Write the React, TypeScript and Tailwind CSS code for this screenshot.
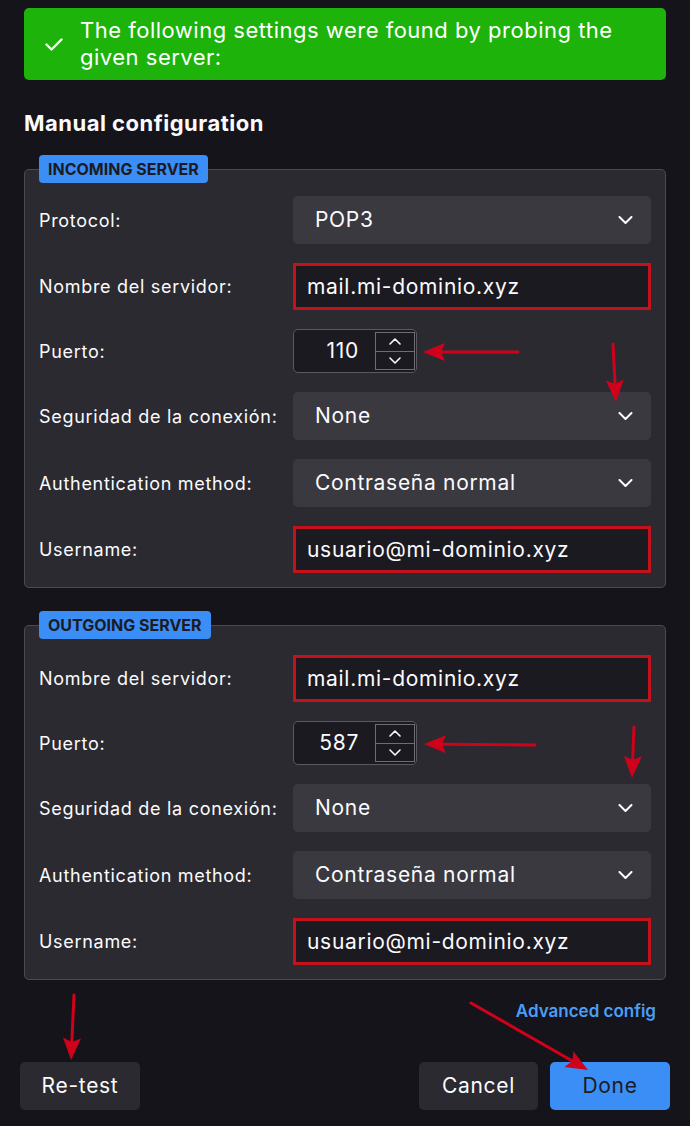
import type { ReactNode } from "react";

/* ---------- small drawings ---------- */
function Chevron() {
  return (
    <svg width="15" height="8" viewBox="0 0 15 8" fill="none">
      <path
        d="M1.5 1 7.5 7 13.5 1"
        stroke="#fbfbfe"
        strokeWidth="2"
        strokeLinecap="round"
        strokeLinejoin="round"
      />
    </svg>
  );
}

function SpinChevron({ up }: { up?: boolean }) {
  return (
    <svg width="12" height="7" viewBox="0 0 12 7" fill="none">
      <path
        d={up ? "M1 6 6 1 11 6" : "M1 1 6 6 11 1"}
        stroke="#fbfbfe"
        strokeWidth="1.6"
        strokeLinecap="round"
        strokeLinejoin="round"
      />
    </svg>
  );
}

function Check() {
  return (
    <svg width="18" height="13" viewBox="0 0 18 13" fill="none">
      <path
        d="M1.5 6.5 6.5 11.5 16.5 1.5"
        stroke="#ffffff"
        strokeWidth="2.4"
        strokeLinecap="round"
        strokeLinejoin="round"
      />
    </svg>
  );
}

/* ---------- red annotation arrows ---------- */
type ArrowProps = { x1: number; y1: number; x2: number; y2: number };

function Arrow({ x1, y1, x2, y2 }: ArrowProps) {
  const len = Math.hypot(x2 - x1, y2 - y1);
  const ux = (x2 - x1) / len;
  const uy = (y2 - y1) / len;
  const px = -uy;
  const py = ux;
  const head = 22;
  const half = 9;
  const bx = x2 - ux * head;
  const by = y2 - uy * head;
  const nx = x2 - ux * (head - 4);
  const ny = y2 - uy * (head - 4);
  const pts = [
    `${x2},${y2}`,
    `${bx + px * half},${by + py * half}`,
    `${nx},${ny}`,
    `${bx - px * half},${by - py * half}`,
  ].join(" ");
  return (
    <g>
      <line x1={x1} y1={y1} x2={nx} y2={ny} stroke="#d0021b" strokeWidth="3" strokeLinecap="round" />
      <polygon points={pts} fill="#d0021b" />
    </g>
  );
}

const arrows: ArrowProps[] = [
  { x1: 518, y1: 352, x2: 423, y2: 352 },
  { x1: 613, y1: 344, x2: 616, y2: 402 },
  { x1: 535, y1: 745, x2: 424, y2: 744 },
  { x1: 634, y1: 727, x2: 632, y2: 778 },
  { x1: 74, y1: 995, x2: 71, y2: 1060 },
  { x1: 471, y1: 1003, x2: 588, y2: 1070 },
];

/* ---------- form controls ---------- */
function Select({ value }: { value: string }) {
  return (
    <div className="flex h-12 items-center justify-between rounded-[5px] bg-[#3a3940] pl-[22px] pr-[18px] text-[21px] tracking-[0.7px]">
      <span>{value}</span>
      <Chevron />
    </div>
  );
}

function TextInput({ value }: { value: string }) {
  return (
    <div className="flex h-[47px] items-center border-[3px] border-[#c4121c] bg-[#1b1a20] px-[11px] text-[21px] tracking-[0.7px]">
      {value}
    </div>
  );
}

function Spinner({ value }: { value: string }) {
  return (
    <div className="flex h-11 w-[124px] items-center rounded-[5px] border border-[#5b5a62] bg-[#1b1a20] pr-px">
      <span className="flex-1 pr-4 text-right text-[21px] tracking-[0.7px]">{value}</span>
      <div className="flex h-[38px] w-10 flex-col border border-[#6e6d74]">
        <span className="flex flex-1 items-center justify-center border-b border-[#6e6d74]">
          <SpinChevron up />
        </span>
        <span className="flex flex-1 items-center justify-center">
          <SpinChevron />
        </span>
      </div>
    </div>
  );
}

function Row({ label, children }: { label: string; children: ReactNode }) {
  return (
    <>
      <span className="text-[18px] tracking-[0.7px]">{label}</span>
      <div>{children}</div>
    </>
  );
}

function ServerBox({ title, top, children }: { title: string; top: string; children: ReactNode }) {
  return (
    <fieldset className="rounded-[5px] border border-[#4a4950] bg-[#2a2a30] px-[14px] pb-[14px]">
      <legend className="flex h-7 items-center rounded-[4px] bg-[#3b8ef5] px-[9px] text-[16px] font-bold text-[#1c1b22]">
        {title}
      </legend>
      <div className={`grid grid-cols-[254px_1fr] items-center gap-y-[19px] ${top}`}>{children}</div>
    </fieldset>
  );
}

/* ---------- page ---------- */
export default function App() {
  return (
    <div className="relative h-[1126px] w-[690px] overflow-hidden bg-[#15141a] font-['Inter','Liberation_Sans',sans-serif] text-[#fbfbfe]">
      <div className="px-6 pt-2">
        <div className="flex h-[72px] items-center gap-[17px] rounded-[5px] bg-[#1db30b] pl-[21px] text-[22px] leading-[27px] tracking-[0.5px] text-white">
          <Check />
          <p>
            The following settings were found by probing the
            <br />
            given server:
          </p>
        </div>

        <h2 className="mt-[30px] text-[22px] font-bold leading-[26px] tracking-[0.5px]">Manual configuration</h2>

        <div className="mt-[19px]">
          <ServerBox title="INCOMING SERVER" top="pt-[13px]">
            <Row label="Protocol:">
              <Select value="POP3" />
            </Row>
            <Row label="Nombre del servidor:">
              <TextInput value="mail.mi-dominio.xyz" />
            </Row>
            <Row label="Puerto:">
              <Spinner value="110" />
            </Row>
            <Row label="Seguridad de la conexión:">
              <Select value="None" />
            </Row>
            <Row label="Authentication method:">
              <Select value="Contraseña normal" />
            </Row>
            <Row label="Username:">
              <TextInput value="usuario@mi-dominio.xyz" />
            </Row>
          </ServerBox>
        </div>

        <div className="mt-[23px]">
          <ServerBox title="OUTGOING SERVER" top="pt-[16px]">
            <Row label="Nombre del servidor:">
              <TextInput value="mail.mi-dominio.xyz" />
            </Row>
            <Row label="Puerto:">
              <Spinner value="587" />
            </Row>
            <Row label="Seguridad de la conexión:">
              <Select value="None" />
            </Row>
            <Row label="Authentication method:">
              <Select value="Contraseña normal" />
            </Row>
            <Row label="Username:">
              <TextInput value="usuario@mi-dominio.xyz" />
            </Row>
          </ServerBox>
        </div>

        <div className="mr-[10px] mt-5 text-right text-[17px] font-semibold leading-[22px] text-[#4a9ef7]">
          Advanced config
        </div>
      </div>

      <div className="mt-10 flex items-center px-5">
        <button className="h-12 w-[120px] rounded-[5px] bg-[#2a2a30] text-[21px] tracking-[0.7px]">Re-test</button>
        <div className="ml-auto flex gap-3">
          <button className="h-12 w-[119px] rounded-[5px] bg-[#2a2a30] text-[21px] tracking-[0.7px]">Cancel</button>
          <button className="h-12 w-[120px] rounded-[5px] bg-[#3b8ef5] text-[21px] tracking-[0.7px] text-[#1c1b22]">
            Done
          </button>
        </div>
      </div>

      <svg className="pointer-events-none absolute inset-0" width="690" height="1126" viewBox="0 0 690 1126">
        {arrows.map((a, i) => (
          <Arrow key={i} {...a} />
        ))}
      </svg>
    </div>
  );
}
